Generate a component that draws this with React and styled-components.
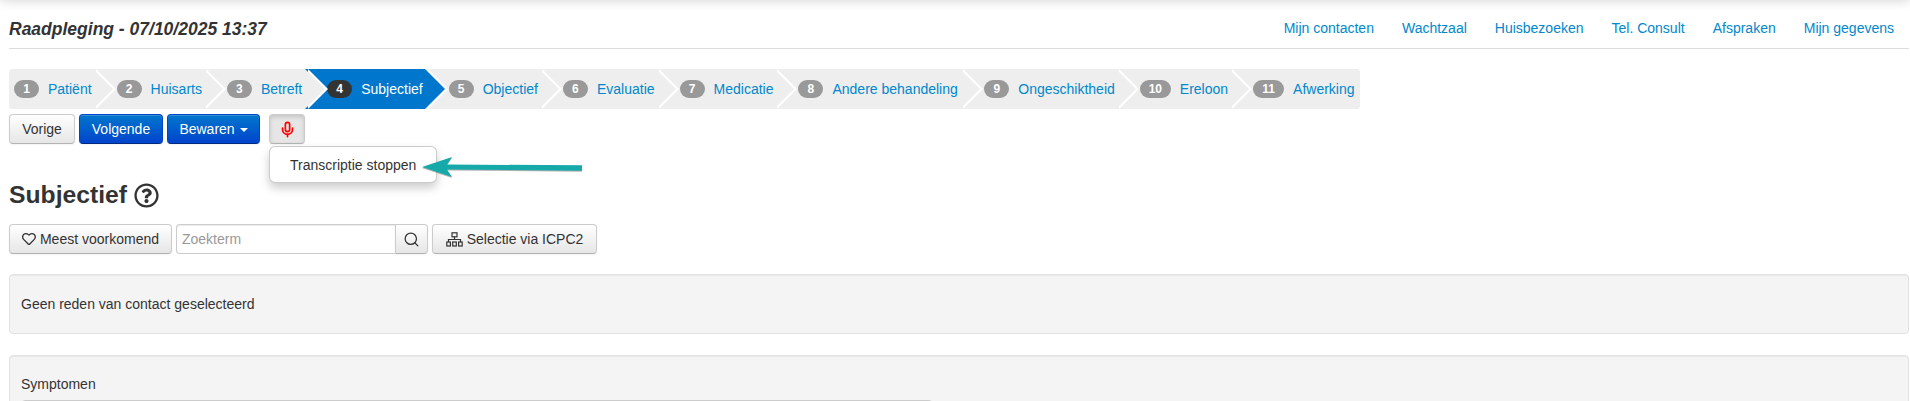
import React from 'react';
import styled, { createGlobalStyle } from 'styled-components';
import { Mic, Search } from 'lucide-react';
import { FaRegQuestionCircle, FaRegHeart } from 'react-icons/fa';

const GlobalStyle = createGlobalStyle`
  html, body {
    margin: 0;
    padding: 0;
    background: #fff;
    overflow: hidden;
  }
  body {
    font-family: "Liberation Sans", Arial, sans-serif;
    font-size: 14px;
    line-height: 20px;
    color: #333;
  }
`;

const Page = styled.div`
  position: relative;
  height: 401px;
  padding: 0 1px 0 9px;
  overflow: hidden;
  &::before {
    content: '';
    position: absolute;
    left: 0;
    right: 0;
    top: -10px;
    height: 10px;
    box-shadow: 0 0 12px rgba(0, 0, 0, 0.2);
  }
`;

const Header = styled.header`
  display: flex;
  align-items: center;
  justify-content: space-between;
  height: 49px;
  padding-top: 8px;
  box-sizing: border-box;
  border-bottom: 1px solid #ddd;
`;

const Title = styled.h1`
  margin: 2px 0 0;
  font-size: 17.5px;
  font-weight: bold;
  font-style: italic;
  color: #333;
`;

const TopNav = styled.nav`
  display: flex;
  gap: 28px;
  padding-right: 15px;
`;

const NavLink = styled.a`
  color: #0088cc;
  font-size: 14px;
  text-decoration: none;
`;

const Steps = styled.ol`
  display: inline-flex;
  list-style: none;
  height: 40px;
  margin: 20px 0 0;
  padding: 0;
  background: #eee;
  border-radius: 4px;
`;

const Step = styled.li`
  position: relative;
  display: flex;
  align-items: center;
  height: 40px;
  padding: 0 ${p => p.$right}px 0 ${p => p.$left}px;
  background: ${p => (p.$active ? '#0077cc' : '#eee')};
  border-radius: ${p => (p.$first ? '4px 0 0 4px' : p.$last ? '0 4px 4px 0' : '0')};

  ${p => !p.$last && `
    &::before, &::after {
      content: '';
      position: absolute;
      top: 0;
      left: 100%;
      border-top: 20px solid transparent;
      border-bottom: 20px solid transparent;
    }
    &::before {
      margin-left: 3px;
      border-left: 20px solid #fff;
      z-index: 1;
    }
    &::after {
      border-left: 20px solid ${p.$active ? '#0077cc' : '#eee'};
      z-index: 2;
    }
  `}
`;

const StepBadge = styled.span`
  display: block;
  width: ${p => (p.$wide ? 31 : 25)}px;
  height: 18px;
  line-height: 18px;
  border-radius: 9px;
  margin-right: 9px;
  text-align: center;
  font-size: 12px;
  font-weight: bold;
  color: #fff;
  background: ${p => (p.$active ? '#333' : '#999')};
`;

const StepLink = styled.a`
  color: ${p => (p.$active ? '#fff' : '#0088cc')};
  text-decoration: none;
  white-space: nowrap;
`;

const Actions = styled.div`
  display: flex;
  gap: 4px;
  margin-top: 5px;
`;

const Button = styled.button`
  display: inline-flex;
  align-items: center;
  justify-content: center;
  width: ${p => (p.$width ? `${p.$width}px` : 'auto')};
  height: 30px;
  padding: 0 12px;
  box-sizing: border-box;
  font: 14px/20px "Liberation Sans", Arial, sans-serif;
  color: #333;
  white-space: nowrap;
  background: linear-gradient(to bottom, #fff, #e6e6e6);
  border: 1px solid #ccc;
  border-bottom-color: #b3b3b3;
  border-radius: 4px;
  box-shadow: inset 0 1px 0 rgba(255, 255, 255, 0.2), 0 1px 2px rgba(0, 0, 0, 0.05);
`;

const PrimaryButton = styled(Button)`
  color: #fff;
  background: linear-gradient(to bottom, #0077cc, #0044cc);
  border-color: #0044cc #0044cc #002a80;
`;

const Caret = styled.span`
  width: 0;
  height: 0;
  margin-left: 5px;
  margin-top: 1px;
  border-left: 4px solid transparent;
  border-right: 4px solid transparent;
  border-top: 4px solid #fff;
`;

const MicWrap = styled.div`
  position: relative;
  margin-left: 5px;
`;

const MicButton = styled(Button)`
  padding: 0;
  background: #e6e6e6;
  box-shadow: inset 0 2px 4px rgba(0, 0, 0, 0.15), 0 1px 2px rgba(0, 0, 0, 0.05);
  color: #f00;
`;

const Menu = styled.div`
  position: absolute;
  top: 32px;
  left: 0;
  width: 168px;
  height: 37px;
  box-sizing: border-box;
  padding: 8px 0 0 20px;
  background: #fff;
  border: 1px solid rgba(0, 0, 0, 0.2);
  border-radius: 6px;
  box-shadow: 0 5px 10px rgba(0, 0, 0, 0.2);
  white-space: nowrap;
  z-index: 5;
`;

const Arrow = styled.svg`
  position: absolute;
  left: 420px;
  top: 150px;
  z-index: 6;
  filter: drop-shadow(0 1px 0 rgba(0, 0, 0, 0.3));
`;

const Heading = styled.h2`
  display: flex;
  align-items: center;
  gap: 7px;
  margin: 35px 0 0;
  font-size: 24.7px;
  line-height: 32px;
  font-weight: bold;
  color: #333;
`;

const Toolbar = styled.div`
  display: flex;
  gap: 4px;
  margin-top: 13px;
`;

const ToolButton = styled(Button)`
  gap: 4px;
`;

const SearchGroup = styled.div`
  display: flex;
`;

const SearchInput = styled.input`
  width: 219px;
  height: 30px;
  box-sizing: border-box;
  padding: 0 5px;
  font: 14px "Liberation Sans", Arial, sans-serif;
  border: 1px solid #ccc;
  border-right: 0;
  border-radius: 4px 0 0 4px;
  box-shadow: inset 0 1px 1px rgba(0, 0, 0, 0.075);
  &::placeholder {
    color: #999;
    opacity: 1;
  }
`;

const SearchButton = styled(Button)`
  padding: 0;
  border-radius: 0 4px 4px 0;
`;

const Well = styled.section`
  box-sizing: border-box;
  padding: ${p => p.$top}px 11px 19px;
  min-height: ${p => p.$height}px;
  margin-top: ${p => p.$gap}px;
  background: #f4f4f4;
  border: 1px solid #e3e3e3;
  border-radius: 4px;
  box-shadow: inset 0 1px 1px rgba(0, 0, 0, 0.05);
`;

const FieldLabel = styled.div`
  margin-bottom: 6px;
`;

const FieldBox = styled.div`
  width: 912px;
  height: 30px;
  box-sizing: border-box;
  background: #fff;
  border: 1px solid #ccc;
  border-radius: 4px;
`;

const navItems = ['Mijn contacten', 'Wachtzaal', 'Huisbezoeken', 'Tel. Consult', 'Afspraken', 'Mijn gegevens'];
const steps = [
  { label: 'Patiënt', left: 5, right: 1 },
  { label: 'Huisarts', left: 24, right: 1 },
  { label: 'Betreft', left: 24, right: 3 },
  { label: 'Subjectief', left: 22, right: 2 },
  { label: 'Objectief', left: 24, right: 1 },
  { label: 'Evaluatie', left: 24, right: 1 },
  { label: 'Medicatie', left: 24, right: 1 },
  { label: 'Andere behandeling', left: 24, right: 2.5 },
  { label: 'Ongeschiktheid', left: 24, right: 1 },
  { label: 'Ereloon', left: 24, right: 1 },
  { label: 'Afwerking', left: 24, right: 5 },
];

const SitemapIcon = () => (
  <svg width="17" height="15" viewBox="0 0 17 15" fill="none" stroke="#333" strokeWidth="1.2">
    <rect x="6" y="0.8" width="5" height="4" />
    <path d="M8.5 4.8V7.5M2.5 10V7.5H14.5V10" />
    <rect x="0.8" y="10" width="3.6" height="4" />
    <rect x="6.7" y="10" width="3.6" height="4" />
    <rect x="12.6" y="10" width="3.6" height="4" />
  </svg>
);

export default function App() {
  return (
    <Page>
      <GlobalStyle />
      <Header>
        <Title>Raadpleging - 07/10/2025 13:37</Title>
        <TopNav>
          {navItems.map(item => <NavLink href="#" key={item}>{item}</NavLink>)}
        </TopNav>
      </Header>

      <Steps>
        {steps.map((step, i) => (
          <Step
            key={step.label}
            $left={step.left}
            $right={step.right}
            $first={i === 0}
            $last={i === steps.length - 1}
            $active={i === 3}
          >
            <StepBadge $active={i === 3} $wide={i > 8}>{i + 1}</StepBadge>
            <StepLink href="#" $active={i === 3}>{step.label}</StepLink>
          </Step>
        ))}
      </Steps>

      <Actions>
        <Button $width={66}>Vorige</Button>
        <PrimaryButton $width={84}>Volgende</PrimaryButton>
        <PrimaryButton $width={93}>Bewaren<Caret /></PrimaryButton>
        <MicWrap>
          <MicButton $width={36}><Mic size={17} strokeWidth={2.4} /></MicButton>
          <Menu>Transcriptie stoppen</Menu>
        </MicWrap>
      </Actions>

      <Arrow width="170" height="32" viewBox="0 0 170 32">
        <path d="M2 17L32 7L27 14.5L162 15.3V20.7L27 19.5L32 27Z" fill="#16a9a9" />
      </Arrow>

      <Heading>Subjectief <FaRegQuestionCircle size={25} /></Heading>

      <Toolbar>
        <ToolButton $width={163}><FaRegHeart size={14} />Meest voorkomend</ToolButton>
        <SearchGroup>
          <SearchInput placeholder="Zoekterm" />
          <SearchButton $width={33}><Search size={17} strokeWidth={1.8} /></SearchButton>
        </SearchGroup>
        <ToolButton $width={165}><SitemapIcon />Selectie via ICPC2</ToolButton>
      </Toolbar>

      <Well $gap={20} $top={19} $height={59}>Geen reden van contact geselecteerd</Well>
      <Well $gap={21} $top={18} $height={90}>
        <FieldLabel>Symptomen</FieldLabel>
        <FieldBox />
      </Well>
    </Page>
  );
}
